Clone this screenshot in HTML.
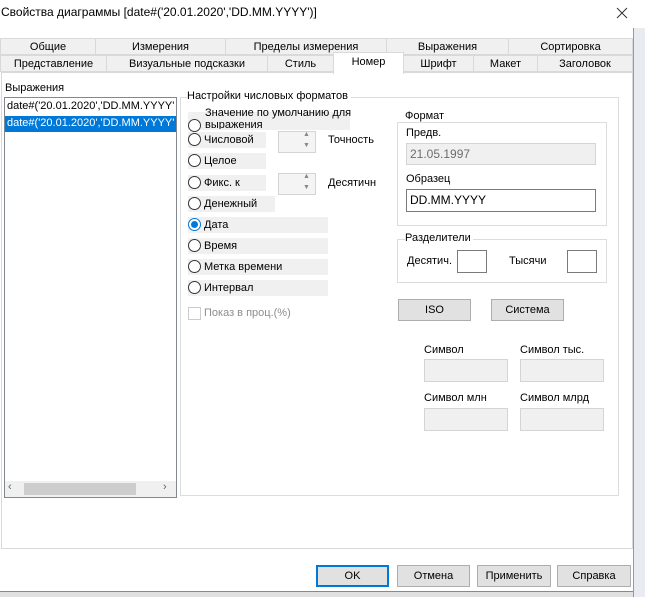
<!DOCTYPE html>
<html><head><meta charset="utf-8"><style>
*{box-sizing:border-box}
body{margin:0;width:645px;height:597px;background:#fff;position:relative;overflow:hidden;font-family:"Liberation Sans",sans-serif;font-size:11px;color:#000}
.a{position:absolute}
.t{position:absolute;white-space:nowrap}
.tab{position:absolute;height:17px;border:1px solid #d9d9d9;background:#f0f0f0;text-align:center;line-height:16px}
.rb{position:absolute;left:188px;width:13px;height:13px;border:1px solid #333;border-radius:50%;background:#fff}
.strip{position:absolute;background:#f0f0f0;height:16px}
.btn{position:absolute;height:22px;border:1px solid #adadad;background:#e1e1e1;text-align:center;line-height:20px}
.grp{position:absolute;border:1px solid #dcdcdc}
.in{position:absolute;border:1px solid #d4d4d4;background:#f0f0f0}
</style></head><body>
<div class="t" style="left:1px;top:5px;font-size:12px">Свойства диаграммы [date#('20.01.2020','DD.MM.YYYY')]</div>
<svg class="a" style="left:616px;top:7px" width="12" height="12"><path d="M1 1L11 11M11 1L1 11" stroke="#333" stroke-width="1"/></svg>
<div class="a" style="left:633px;top:28px;width:12px;height:569px;background:#e8ebf0;border-left:1px solid #999"></div>
<div class="tab" style="left:0;top:38px;width:96px">Общие</div>
<div class="tab" style="left:95px;top:38px;width:131px">Измерения</div>
<div class="tab" style="left:225px;top:38px;width:162px">Пределы измерения</div>
<div class="tab" style="left:386px;top:38px;width:123px">Выражения</div>
<div class="tab" style="left:508px;top:38px;width:125px">Сортировка</div>
<div class="tab" style="left:0;top:55px;width:107px">Представление</div>
<div class="tab" style="left:106px;top:55px;width:162px">Визуальные подсказки</div>
<div class="tab" style="left:267px;top:55px;width:67px">Стиль</div>
<div class="tab" style="left:403px;top:55px;width:71px">Шрифт</div>
<div class="tab" style="left:473px;top:55px;width:65px">Макет</div>
<div class="tab" style="left:537px;top:55px;width:96px">Заголовок</div>
<div class="a" style="left:1px;top:72px;width:632px;height:477px;border:1px solid #d9d9d9;background:#fff"></div>
<div class="a" style="left:333px;top:52px;width:71px;height:22px;border:1px solid #d9d9d9;border-bottom:none;background:#fff;text-align:center;line-height:18px">Номер</div>
<div class="t" style="left:5px;top:82px">Выражения</div>
<div class="a" style="left:4px;top:97px;width:173px;height:401px;border:1px solid #828790;background:#fff"></div>
<div class="t" style="left:7px;top:100px">date#('20.01.2020','DD.MM.YYYY'</div>
<div class="a" style="left:5px;top:116px;width:171px;height:16px;background:#0078d7"></div>
<div class="t" style="left:7px;top:117px;color:#fff">date#('20.01.2020','DD.MM.YYYY'</div>
<div class="a" style="left:5px;top:481px;width:171px;height:16px;background:#f0f0f0"></div>
<div class="a" style="left:24px;top:483px;width:112px;height:12px;background:#cdcdcd"></div>
<div class="t" style="left:8px;top:481px;color:#606060">‹</div>
<div class="t" style="left:163px;top:481px;color:#606060">›</div>
<div class="grp" style="left:180px;top:97px;width:439px;height:399px"></div>
<div class="t" style="left:187px;top:90px;background:#fff;padding-right:3px">Настройки числовых форматов</div>
<div class="strip" style="left:188px;top:112px;width:162px;height:18px"></div>
<div class="t" style="left:205px;top:107px">Значение по умолчанию для</div>
<div class="t" style="left:205px;top:119px;height:10px;overflow:hidden">выражения</div>
<div class="rb" style="top:119px"></div>
<div class="strip" style="left:188px;top:132px;width:78px"></div><div class="rb" style="top:133px"></div><div class="t" style="left:204px;top:134px">Числовой</div>
<div class="in" style="left:278px;top:131px;width:38px;height:22px;background:#f4f4f4"></div>
<div class="t" style="left:303px;top:131px;font-size:7px;color:#888">▲</div><div class="t" style="left:303px;top:142px;font-size:7px;color:#888">▼</div>
<div class="t" style="left:328px;top:134px">Точность</div>
<div class="strip" style="left:188px;top:153px;width:78px"></div><div class="rb" style="top:154px"></div><div class="t" style="left:204px;top:155px">Целое</div>
<div class="strip" style="left:188px;top:175px;width:78px"></div><div class="rb" style="top:176px"></div><div class="t" style="left:204px;top:177px">Фикс. к</div>
<div class="in" style="left:278px;top:173px;width:38px;height:22px;background:#f4f4f4"></div>
<div class="t" style="left:303px;top:173px;font-size:7px;color:#888">▲</div><div class="t" style="left:303px;top:184px;font-size:7px;color:#888">▼</div>
<div class="t" style="left:328px;top:177px">Десятичн</div>
<div class="strip" style="left:188px;top:196px;width:87px"></div><div class="rb" style="top:197px"></div><div class="t" style="left:204px;top:198px">Денежный</div>
<div class="strip" style="left:188px;top:217px;width:140px"></div><div class="rb" style="top:218px;border-color:#0078d7"></div><div class="a" style="left:191px;top:221px;width:7px;height:7px;border-radius:50%;background:#0078d7"></div><div class="t" style="left:204px;top:219px">Дата</div>
<div class="strip" style="left:188px;top:238px;width:140px"></div><div class="rb" style="top:239px"></div><div class="t" style="left:204px;top:240px">Время</div>
<div class="strip" style="left:188px;top:259px;width:140px"></div><div class="rb" style="top:260px"></div><div class="t" style="left:204px;top:261px">Метка времени</div>
<div class="strip" style="left:188px;top:280px;width:140px"></div><div class="rb" style="top:281px"></div><div class="t" style="left:204px;top:282px">Интервал</div>
<div class="a" style="left:188px;top:307px;width:13px;height:13px;border:1px solid #ccc"></div><div class="t" style="left:204px;top:307px;color:#8d8d8d">Показ в проц.(%)</div>
<div class="grp" style="left:397px;top:122px;width:210px;height:104px"></div>
<div class="t" style="left:405px;top:110px;background:#fff;padding-right:2px">Формат</div>
<div class="t" style="left:406px;top:127px">Предв.</div>
<div class="in" style="left:406px;top:143px;width:190px;height:22px;color:#6d6d6d;padding:3px 3px;font-size:12px">21.05.1997</div>
<div class="t" style="left:406px;top:173px">Образец</div>
<div class="a" style="left:406px;top:189px;width:190px;height:23px;border:1px solid #7a7a7a;padding:3px 3px;font-size:12px">DD.MM.YYYY</div>
<div class="grp" style="left:397px;top:239px;width:210px;height:44px"></div>
<div class="t" style="left:405px;top:232px;background:#fff;padding-right:2px">Разделители</div>
<div class="t" style="left:407px;top:255px">Десятич.</div>
<div class="a" style="left:457px;top:250px;width:30px;height:23px;border:1px solid #7a7a7a"></div>
<div class="t" style="left:509px;top:255px">Тысячи</div>
<div class="a" style="left:567px;top:250px;width:30px;height:23px;border:1px solid #7a7a7a"></div>
<div class="btn" style="left:398px;top:299px;width:73px">ISO</div>
<div class="btn" style="left:491px;top:299px;width:73px">Система</div>
<div class="t" style="left:424px;top:344px">Символ</div>
<div class="t" style="left:520px;top:344px">Символ тыс.</div>
<div class="in" style="left:424px;top:359px;width:84px;height:23px"></div>
<div class="in" style="left:520px;top:359px;width:84px;height:23px"></div>
<div class="t" style="left:424px;top:392px">Символ млн</div>
<div class="t" style="left:520px;top:392px">Символ млрд</div>
<div class="in" style="left:424px;top:408px;width:84px;height:23px"></div>
<div class="in" style="left:520px;top:408px;width:84px;height:23px"></div>
<div class="btn" style="left:316px;top:565px;width:73px;border:2px solid #0078d7;line-height:18px">OK</div>
<div class="btn" style="left:397px;top:565px;width:73px">Отмена</div>
<div class="btn" style="left:477px;top:565px;width:74px">Применить</div>
<div class="btn" style="left:557px;top:565px;width:74px">Справка</div>
<div class="a" style="left:0;top:591px;width:633px;height:6px;background:#e0e0e0;border-top:1px solid #888"></div>
</body></html>
